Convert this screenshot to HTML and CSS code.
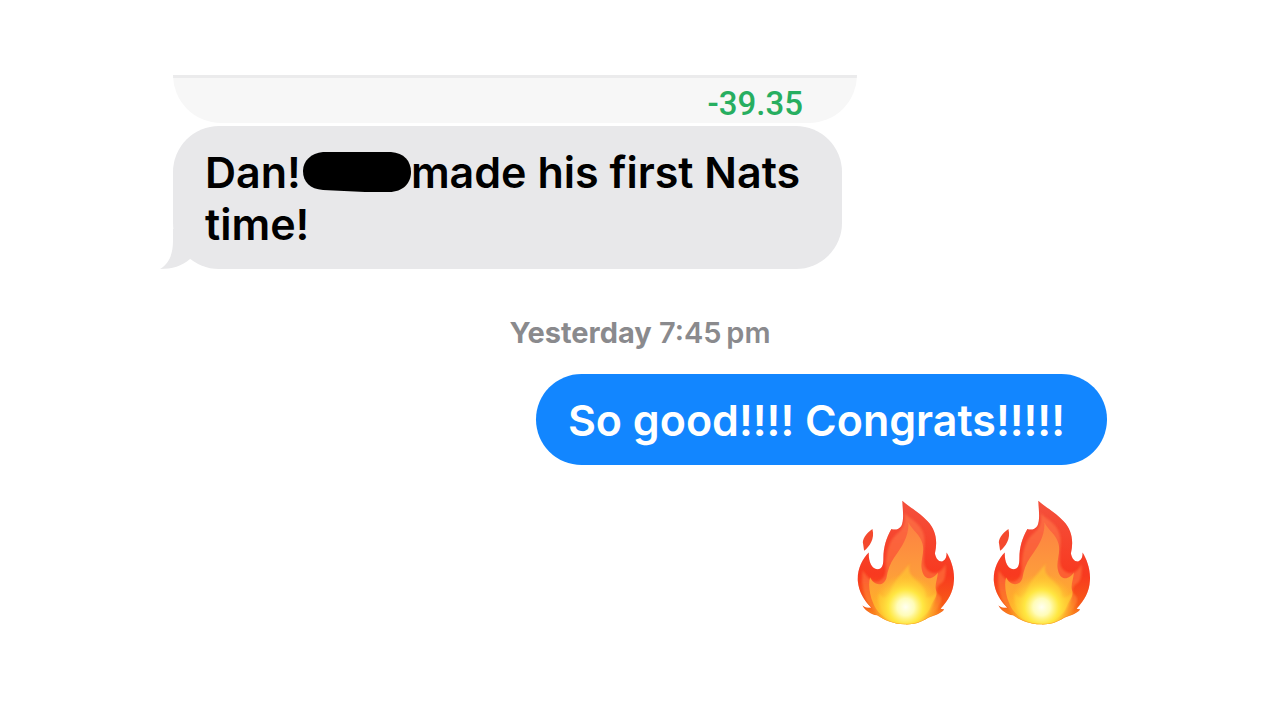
FILE: index.html
```html
<!DOCTYPE html>
<html lang="en">
<head>
    <meta charset="UTF-8">
    <meta name="viewport" content="width=device-width, initial-scale=1.0">
    <title>Messages</title>
    <link rel="stylesheet" href="styles.css">
</head>
<body>

    <!-- Shared flame artwork -->
    <svg class="defs" width="0" height="0" aria-hidden="true">
        <defs>
            <linearGradient id="outer" x1="0" y1="0" x2="0" y2="1">
                <stop offset="0" stop-color="#f4513d"/>
                <stop offset="0.6" stop-color="#f8391f"/>
                <stop offset="0.84" stop-color="#f75b17"/>
                <stop offset="1" stop-color="#fcae25"/>
            </linearGradient>
            <linearGradient id="middle" x1="0" y1="0" x2="0" y2="1">
                <stop offset="0" stop-color="#fb6844"/>
                <stop offset="0.6" stop-color="#fc6032"/>
                <stop offset="1" stop-color="#fd8b22"/>
            </linearGradient>
            <linearGradient id="inner" x1="0" y1="0" x2="0" y2="1">
                <stop offset="0" stop-color="#fd8043"/>
                <stop offset="0.45" stop-color="#fd9a3c"/>
                <stop offset="0.75" stop-color="#ffac2c"/>
                <stop offset="1" stop-color="#ffb825"/>
            </linearGradient>
            <radialGradient id="glow" gradientUnits="userSpaceOnUse" cx="184" cy="352" r="100">
                <stop offset="0" stop-color="#fffff0"/>
                <stop offset="0.26" stop-color="#fffcb8"/>
                <stop offset="0.52" stop-color="#ffee45" stop-opacity="0.85"/>
                <stop offset="1" stop-color="#ffc52b" stop-opacity="0"/>
            </radialGradient>
            <filter id="soft" x="-10%" y="-10%" width="120%" height="120%">
                <feGaussianBlur stdDeviation="3"/>
            </filter>
            <path id="flame-shape" d="M174 32C188 46 224 66 250 94C274 120 281 150 272 191C275 206 282 215 292 215C303 214 308 201 307 188C319 207 332 240 329 274C327 307 313 331 289 357L300 359C287 374 267 378 252 384C227 400 205 405 181 404C146 403 121 392 98 377C80 374 63 363 54 347C64 354 73 355 81 354C57 331 43 305 40 274C38 240 52 209 73 188C72 213 80 236 99 238C116 238 117 221 117 203C117 174 125 144 141 117C153 122 164 117 171 108C180 90 175 60 174 32Z"/>
            <clipPath id="flame-clip"><use href="#flame-shape"/></clipPath>
            <symbol id="flame" viewBox="38 30 294 376">
                <path d="M84 117C65 130 52 150 56 162L59 183C75 170 92 147 84 117Z" fill="#f4492e"/>
                <use href="#flame-shape" fill="url(#outer)"/>
                <g clip-path="url(#flame-clip)">
                    <path d="M181 70C193 83 218 94 233 120C248 149 236 173 239 215C240 239 257 250 272 250C290 248 298 233 304 223C305 250 304 269 292 280C275 290 271 306 286 318C295 328 290 346 275 365C230 398 139 402 80 355C59 331 48 280 55 241C69 264 86 281 105 274C127 262 125 240 124 221C127 180 137 148 160 130C177 116 184 100 181 70Z" fill="url(#middle)" filter="url(#soft)"/>
                    <path d="M192 97C204 122 229 135 235 163C242 193 224 217 235 248C246 277 270 265 281 248C279 272 270 286 276 304C280 319 267 333 261 345C255 365 244 376 222 391L222 410L150 410L150 397C120 388 96 367 86 340C75 313 71 282 77 263C91 291 119 288 126 265C130 241 137 221 150 202C174 170 195 136 192 97Z" fill="url(#inner)"/>
                    <path d="M197 220C187 246 202 259 222 277C239 292 246 305 244 322C259 326 268 315 276 308C271 345 250 382 217 397L141 396C110 371 97 344 104 309C116 332 133 322 139 302C148 272 174 251 197 220Z" fill="#ffcc35" opacity="0.6" filter="url(#soft)"/>
                    <circle cx="184" cy="352" r="100" fill="url(#glow)"/>
                    <use href="#flame-shape" fill="none" stroke="#ed3620" stroke-width="3" opacity="0.3"/>
                </g>
            </symbol>
        </defs>
    </svg>

    <main class="conversation">

        <!-- Preview card, only its last row is in view -->
        <div class="preview-card">
            <span class="amount">-39.35</span>
        </div>

        <!-- Received -->
        <div class="bubble received">
            <p>Dan!<svg class="redacted" viewBox="0 0 108 40" aria-hidden="true"><path d="M20 0L50 0L88 0C101 1 108 9 108 20C108 31 100 40 86 40L62 40L20 38C7 37 0 30 0 19C0 9 8 1 20 0Z"/></svg>made his first Nats time!</p>
            <svg class="tail" viewBox="0 0 44 40" aria-hidden="true"><path d="M13 0V12C13 25 9 35 0 40C12 40 22 37 30 30L44 20V0Z"/></svg>
        </div>

        <p class="timestamp"><strong>Yesterday</strong> 7:45&#8201;pm</p>

        <!-- Sent -->
        <div class="bubble sent">
            <p>So good!!!! Congrats!!!!!</p>
        </div>

        <div class="reaction">
            <svg class="flame" role="img" aria-label="Fire"><use href="#flame"/></svg>
            <svg class="flame" role="img" aria-label="Fire"><use href="#flame"/></svg>
        </div>

    </main>

</body>
</html>
```

FILE: styles.css
```css
/* General Styles */
* {
    margin: 0;
    padding: 0;
    box-sizing: border-box;
}
body {
    background: white;
    color: black;
    font-family: Inter, "Liberation Sans", sans-serif;
}
.defs {
    position: absolute;
}

/* Conversation */
.conversation {
    display: flex;
    flex-direction: column;
    max-width: 934px;
    margin: 0 auto;
    padding: 75px 0;
}

/* Preview card */
.preview-card {
    align-self: flex-start;
    width: 100%;
    max-width: 684px;
    padding: 7px 54px 0;
    border-top: 3px solid #ebebec;
    border-radius: 0 0 48px 48px;
    background: #f7f7f7;
    text-align: right;
}
.amount {
    display: block;
    color: #27ae60;
    font-family: Roboto, "Liberation Sans", sans-serif;
    font-size: 33px;
    line-height: 38px;
    font-weight: 500;
}

/* Bubbles */
.bubble {
    position: relative;
    border-radius: 46px;
    font-size: 43px;
    line-height: 52px;
    font-weight: 600;
}
.received {
    align-self: flex-start;
    max-width: 669px;
    margin-top: 3px;
    padding: 20px 32px 19px;
    background: #e8e8ea;
}
.sent {
    align-self: flex-end;
    padding: 20px 42px 19px 32px;
    background: #1286ff;
    color: white;
}
.redacted {
    width: 108px;
    height: 40px;
    margin-left: 2px;
    vertical-align: -4px;
}
.tail {
    position: absolute;
    left: -13px;
    bottom: 0;
    width: 44px;
    height: 40px;
    fill: #e8e8ea;
}

/* Timestamp */
.timestamp {
    padding: 44px 0 21px;
    color: #8a8a8d;
    font-size: 29px;
    line-height: 40px;
    font-weight: 600;
    text-align: center;
}
.timestamp strong {
    font-weight: 700;
}

/* Fire */
.reaction {
    display: flex;
    justify-content: flex-end;
    gap: 38px;
    padding: 35px 16px 0;
}
.flame {
    width: 98px;
    height: 125px;
}
```
